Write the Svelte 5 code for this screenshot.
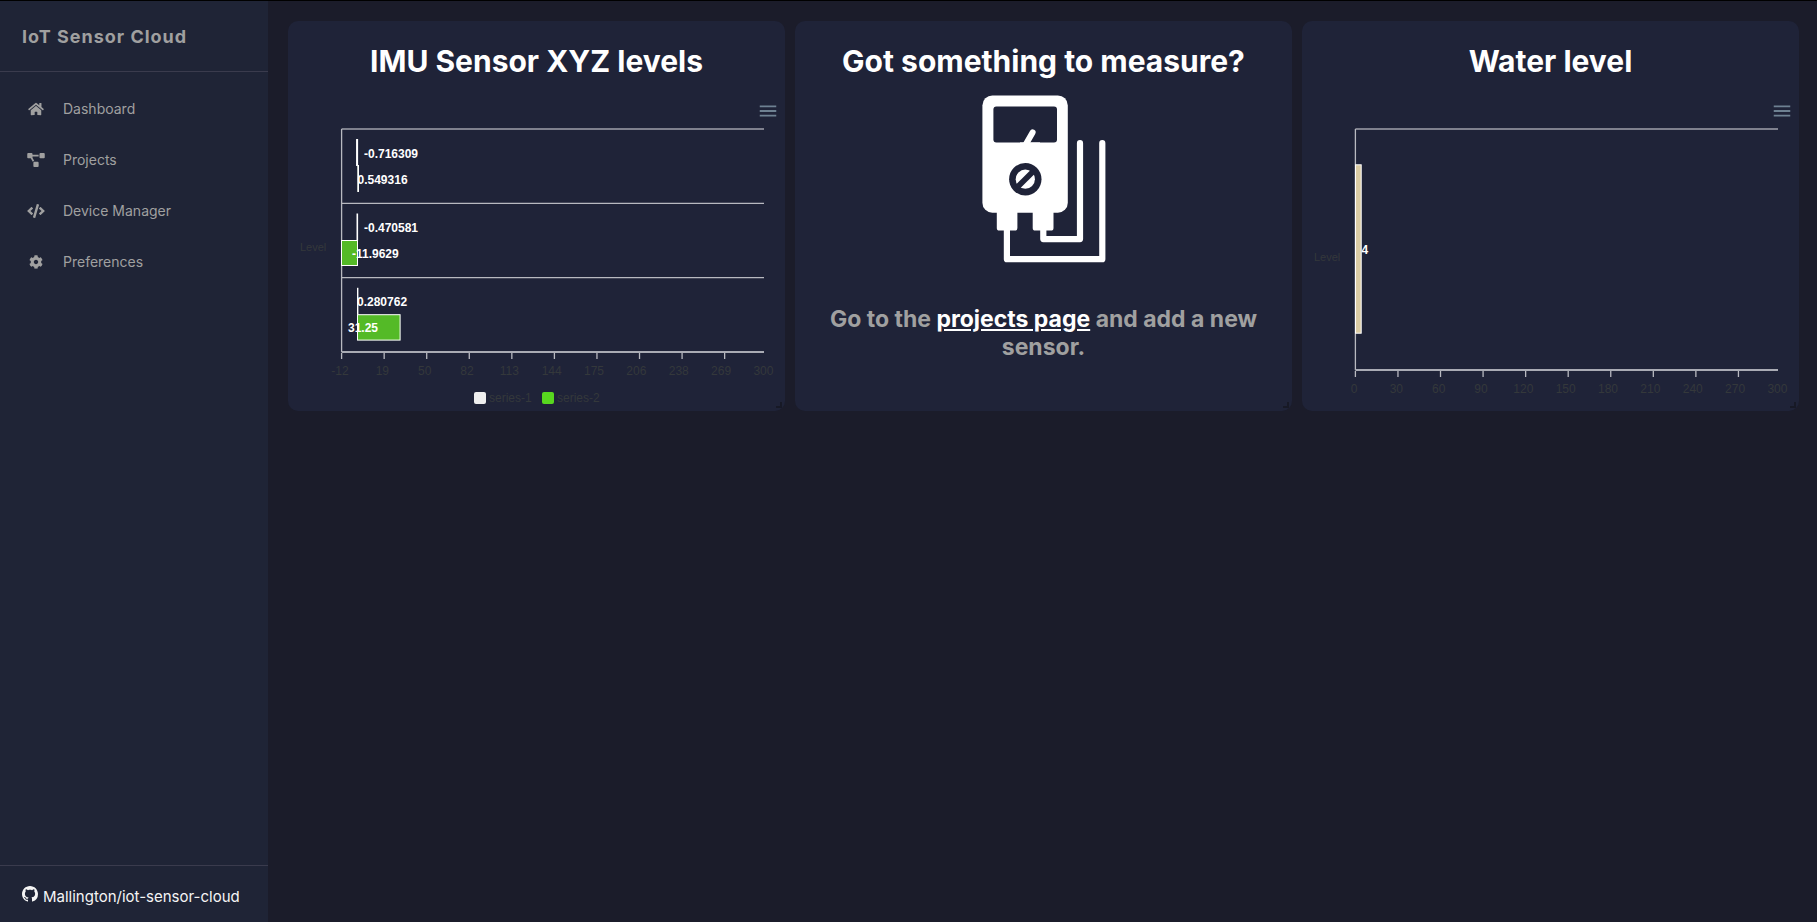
<script>
  const nav = [
    {
      label: 'Dashboard',
      box: '0 0 576 512',
      width: 16,
      d: 'M280.37 148.26L96 300.11V464a16 16 0 0 0 16 16l112.06-.29a16 16 0 0 0 15.92-16V368a16 16 0 0 1 16-16h64a16 16 0 0 1 16 16v95.64a16 16 0 0 0 16 16.05L464 480a16 16 0 0 0 16-16V300L295.67 148.26a12.19 12.19 0 0 0-15.3 0zM571.6 251.47L488 182.56V44.05a12 12 0 0 0-12-12h-56a12 12 0 0 0-12 12v72.61L318.47 43a48 48 0 0 0-61 0L4.34 251.47a12 12 0 0 0-1.6 16.9l25.5 31A12 12 0 0 0 45.15 301l235.22-193.74a12.19 12.19 0 0 1 15.3 0L530.9 301a12 12 0 0 0 16.9-1.6l25.5-31a12 12 0 0 0-1.7-16.93z'
    },
    {
      label: 'Projects',
      box: '0 0 640 512',
      width: 18,
      d: 'M384 320H256c-17.67 0-32 14.33-32 32v128c0 17.67 14.33 32 32 32h128c17.67 0 32-14.33 32-32V352c0-17.67-14.33-32-32-32zM192 32c0-17.67-14.33-32-32-32H32C14.33 0 0 14.33 0 32v128c0 17.67 14.33 32 32 32h95.72l73.16 128.04C211.98 300.98 232.4 288 256 288h.28L192 175.51V128h224V64H192V32zM608 0H480c-17.67 0-32 14.33-32 32v128c0 17.67 14.33 32 32 32h128c17.67 0 32-14.33 32-32V32c0-17.67-14.33-32-32-32z'
    },
    {
      label: 'Device Manager',
      box: '0 0 640 512',
      width: 18,
      d: 'M278.9 511.5l-61-17.7c-6.4-1.8-10-8.5-8.2-14.9L346.2 8.7c1.8-6.4 8.5-10 14.9-8.2l61 17.7c6.4 1.8 10 8.5 8.2 14.9L293.8 503.3c-1.9 6.4-8.5 10.1-14.9 8.2zm-114-112.2l43.5-46.4c4.6-4.9 4.3-12.7-.8-17.2L117 256l90.6-79.7c5.1-4.5 5.5-12.3.8-17.2l-43.5-46.4c-4.5-4.8-12.1-5.1-17-.5L3.8 247.2c-5.1 4.7-5.1 12.8 0 17.5l144.1 135.1c4.9 4.6 12.5 4.4 17-.5zm327.2.6l144.1-135.1c5.1-4.7 5.1-12.8 0-17.5L492.1 112.1c-4.8-4.5-12.4-4.3-17 .5L431.6 159c-4.6 4.9-4.3 12.7.8 17.2L523 256l-90.6 79.7c-5.1 4.5-5.5 12.3-.8 17.2l43.5 46.4c4.5 4.9 12.1 5.1 17 .6z'
    },
    {
      label: 'Preferences',
      box: '0 0 512 512',
      width: 14,
      d: 'M487.4 315.7l-42.6-24.6c4.3-23.2 4.3-47 0-70.2l42.6-24.6c4.9-2.8 7.1-8.6 5.5-14-11.1-35.6-30-67.8-54.7-94.6-3.8-4.1-10-5.1-14.8-2.3L380.8 110c-17.9-15.4-38.5-27.3-60.8-35.1V25.8c0-5.6-3.9-10.5-9.4-11.7-36.7-8.2-74.3-7.8-109.2 0-5.5 1.2-9.4 6.1-9.4 11.7V75c-22.2 7.9-42.8 19.8-60.8 35.1L88.7 85.5c-4.9-2.8-11-1.9-14.8 2.3-24.7 26.7-43.6 58.9-54.7 94.6-1.7 5.4.6 11.2 5.5 14L67.3 221c-4.3 23.2-4.3 47 0 70.2l-42.6 24.6c-4.9 2.8-7.1 8.6-5.5 14 11.1 35.6 30 67.8 54.7 94.6 3.8 4.1 10 5.1 14.8 2.3l42.6-24.6c17.9 15.4 38.5 27.3 60.8 35.1v49.2c0 5.6 3.9 10.5 9.4 11.7 36.7 8.2 74.3 7.8 109.2 0 5.5-1.2 9.4-6.1 9.4-11.7v-49.2c22.2-7.9 42.8-19.8 60.8-35.1l42.6 24.6c4.9 2.8 11 1.9 14.8-2.3 24.7-26.7 43.6-58.9 54.7-94.6 1.5-5.5-.7-11.3-5.6-14.1zM256 336c-44.1 0-80-35.9-80-80s35.9-80 80-80 80 35.9 80 80-35.9 80-80 80z'
    }
  ];

  const imu = {
    left: 53.6,
    bottom: 230,
    grid: [81.3, 155.7],
    level: 129,
    labels: [-12, 19, 50, 82, 113, 144, 175, 206, 238, 269, 300],
    bars: [
      { x: 68.6, y: 17.5, w: 1, h: 26, fill: '#efefef' },
      { x: 69.8, y: 43.5, w: 0.7, h: 26, fill: '#58bc27' },
      { x: 69, y: 92, w: 0.6, h: 26, fill: '#efefef' },
      { x: 53.5, y: 118.5, w: 16, h: 25, fill: '#54ba27' },
      { x: 69.5, y: 166.3, w: 0.4, h: 26, fill: '#efefef' },
      { x: 69.5, y: 192.7, w: 42.6, h: 25.4, fill: '#54ba27' }
    ],
    values: [
      { x: 76, y: 36, text: '-0.716309' },
      { x: 69.5, y: 62, text: '0.549316' },
      { x: 76, y: 110, text: '-0.470581' },
      { x: 64, y: 136, text: '-11.9629' },
      { x: 69, y: 184, text: '0.280762' },
      { x: 60, y: 210, text: '31.25' }
    ],
    legend: [
      { x: 186, fill: '#efefef', text: 'series-1' },
      { x: 254, fill: '#58d71f', text: 'series-2' }
    ]
  };

  const water = {
    left: 53.4,
    bottom: 248,
    grid: [],
    level: 139,
    labels: [0, 30, 60, 90, 120, 150, 180, 210, 240, 270, 300],
    bars: [{ x: 53.5, y: 42.8, w: 5.7, h: 168.4, fill: '#dacba3' }],
    values: [{ x: 59.5, y: 132, text: '4' }],
    legend: []
  };
</script>

{#snippet chart(c, name)}
  <div class="toolbar">
    <button type="button" aria-label="Chart menu">
      <svg viewBox="0 0 24 24" width="22" height="22"><path d="M3 18h18v-2H3v2zm0-5h18v-2H3v2zm0-7v2h18V6H3z" /></svg>
    </button>
  </div>
  <svg class="chart" viewBox="0 0 497 289" role="img" aria-label={name}>
    <g class="axis">
      <line x1={c.left} y1="7" x2="476" y2="7" class="edge" />
      {#each c.grid as y}
        <line x1={c.left} y1={y} x2="476" y2={y} />
      {/each}
      <line x1={c.left} y1="7" x2={c.left} y2={c.bottom} />
      <line x1={c.left} y1={c.bottom} x2="476" y2={c.bottom} class="base" />
      {#each c.labels.slice(0, -1) as _, i}
        <line x1={c.left + i * 42.56} y1={c.bottom + 1} x2={c.left + i * 42.56} y2={c.bottom + 7} />
      {/each}
    </g>
    {#each c.bars as b}
      <rect class="bar" x={b.x} y={b.y} width={b.w} height={b.h} fill={b.fill} />
    {/each}
    {#each c.values as v}
      <text class="value" x={v.x} y={v.y}>{v.text}</text>
    {/each}
    <text class="level" x="12" y={c.level}>Level</text>
    {#each c.labels as l, i}
      <text class="tick" x={52 + i * 42.34} y={c.bottom + 23}>{l}</text>
    {/each}
    {#each c.legend as s}
      <rect x={s.x} y="270" width="12" height="12" rx="2" fill={s.fill} />
      <text class="series" x={s.x + 15} y="280">{s.text}</text>
    {/each}
  </svg>
{/snippet}

<div class="page">
  <aside>
    <header>IoT Sensor Cloud</header>
    <nav>
      {#each nav as item}
        <a href="#{item.label.toLowerCase().replace(' ', '-')}">
          <span class="icon"><svg viewBox={item.box} width={item.width} height="14"><path d={item.d} /></svg></span>
          {item.label}
        </a>
      {/each}
    </nav>
    <footer>
      <a href="#repository">
        <svg viewBox="0 0 16 16" width="16" height="16"><path d="M8 0C3.58 0 0 3.58 0 8c0 3.54 2.29 6.53 5.47 7.59.4.07.55-.17.55-.38 0-.19-.01-.82-.01-1.49-2.01.37-2.53-.49-2.69-.94-.09-.23-.48-.94-.82-1.13-.28-.15-.68-.52-.01-.53.63-.01 1.08.58 1.23.82.72 1.21 1.87.87 2.33.66.07-.52.28-.87.51-1.07-1.78-.2-3.64-.89-3.64-3.95 0-.87.31-1.59.82-2.15-.08-.2-.36-1.02.08-2.12 0 0 .67-.21 2.2.82.64-.18 1.32-.27 2-.27s1.36.09 2 .27c1.53-1.04 2.2-.82 2.2-.82.44 1.1.16 1.92.08 2.12.51.56.82 1.27.82 2.15 0 3.07-1.87 3.75-3.65 3.95.29.25.54.73.54 1.48 0 1.07-.01 1.93-.01 2.2 0 .21.15.46.55.38A8.01 8.01 0 0 0 16 8c0-4.42-3.58-8-8-8z" /></svg>
        <span>Mallington/iot-sensor-cloud</span>
      </a>
    </footer>
  </aside>

  <main>
    <section>
      <h2>IMU Sensor XYZ levels</h2>
      {@render chart(imu, 'IMU Sensor XYZ levels')}
      <span class="handle"></span>
    </section>

    <section>
      <h2>Got something to measure?</h2>
      <svg class="meter" viewBox="-16 0 200 200" width="200" height="200" aria-hidden="true">
        <rect x="22.4" y="15.4" width="85.4" height="117.4" rx="10" fill="#fff" />
        <rect x="33.4" y="26.4" width="63.6" height="36" rx="3" fill="#1f2338" />
        <path d="M66 64L72.6 52.4" stroke="#fff" stroke-width="6" stroke-linecap="round" />
        <path d="M60 62.4h20v5H60z" fill="#fff" />
        <circle cx="65.3" cy="99.2" r="16.2" fill="#1f2338" />
        <circle cx="65.3" cy="99.2" r="9.6" fill="#fff" />
        <path d="M57 107.5L73.6 90.9" stroke="#1f2338" stroke-width="5.6" />
        <path d="M36.8 131h20.6v17a2.6 2.6 0 0 1-2.6 2.6H39.4a2.6 2.6 0 0 1-2.6-2.6zM72.7 131h20.8v17a2.6 2.6 0 0 1-2.6 2.6H75.3a2.6 2.6 0 0 1-2.6-2.6z" fill="#fff" />
        <path d="M46.9 148v31.2h95.4V63.2M83.3 148v11.1H120V63.2" fill="none" stroke="#fff" stroke-width="6.2" stroke-linecap="round" stroke-linejoin="round" />
      </svg>
      <p>Go to the <a href="#projects">projects page</a> and add a new sensor.</p>
      <span class="handle"></span>
    </section>

    <section>
      <h2>Water level</h2>
      {@render chart(water, 'Water level')}
      <span class="handle"></span>
    </section>
  </main>
</div>

<style>
  :global(body) {
    background: #1b1c2a;
  }
  .page {
    box-sizing: border-box;
    display: flex;
    min-height: 100vh;
    border-top: 1px solid #000;
    font-family: Inter, sans-serif;
    color: #fff;
    background: #1b1c2a;
  }
  aside {
    display: flex;
    flex-direction: column;
    flex: 0 0 268px;
    background: #1f2436;
    color: #a0a0a0;
  }
  header {
    padding: 25px 22px 23px;
    border-bottom: 1px solid #3a3b4d;
    font-size: 18px;
    font-weight: 700;
    line-height: 22px;
    letter-spacing: 1px;
  }
  nav {
    display: flex;
    flex: 1;
    flex-direction: column;
    padding-top: 11px;
  }
  nav a {
    display: flex;
    align-items: center;
    gap: 9px;
    padding: 0 18px;
    color: inherit;
    font-size: 14px;
    line-height: 51px;
    text-decoration: none;
  }
  .icon {
    display: flex;
    justify-content: center;
    width: 36px;
  }
  svg {
    display: block;
  }
  .icon svg,
  footer svg {
    fill: currentColor;
  }
  footer {
    padding: 20px 22px 15px;
    border-top: 1px solid #3a3b4d;
  }
  footer a {
    display: flex;
    align-items: flex-start;
    gap: 5px;
    color: #f5f5f5;
    font-size: 15px;
    line-height: 21px;
    text-decoration: none;
    white-space: nowrap;
  }
  main {
    display: grid;
    flex: 1;
    grid-template-columns: repeat(3, minmax(0, 1fr));
    align-items: stretch;
    align-content: start;
    gap: 10px;
    padding: 20px 18px 20px 20px;
  }
  section {
    position: relative;
    display: flex;
    flex-direction: column;
    align-items: center;
    border-radius: 10px;
    background: #1f2338;
  }
  h2 {
    margin: 0;
    padding-top: 21px;
    font-size: 30px;
    font-weight: 700;
    line-height: 38px;
    text-align: center;
  }
  .toolbar {
    display: flex;
    justify-content: flex-end;
    align-self: stretch;
    padding: 20px 6px 0;
  }
  button {
    padding: 0;
    border: 0;
    background: none;
    cursor: pointer;
  }
  button svg {
    fill: #6e8192;
  }
  .chart {
    width: 100%;
    height: auto;
    font-family: "Liberation Sans", Arial, sans-serif;
    font-size: 12px;
  }
  .axis line {
    stroke: #b8b9c0;
    stroke-width: 1.3;
  }
  .axis .edge {
    stroke: #7f818e;
    stroke-width: 2;
  }
  .axis .base {
    stroke: #a9abb4;
    stroke-width: 2;
  }
  .bar {
    stroke: #fff;
    stroke-width: 1;
  }
  .value {
    fill: #fff;
    font-weight: 700;
  }
  .level,
  .tick,
  .series {
    fill: #34383b;
  }
  .level {
    font-size: 11px;
  }
  .tick {
    text-anchor: middle;
  }
  p {
    margin: 0;
    padding: 25px 24px 0;
    color: #a0a0a0;
    font-size: 23px;
    font-weight: 700;
    line-height: 28px;
    text-align: center;
  }
  p a {
    color: #fff;
  }
  .handle {
    position: absolute;
    right: 3px;
    bottom: 3px;
    width: 4px;
    height: 4px;
    border-right: 2px solid #171926;
    border-bottom: 2px solid #171926;
  }
</style>
